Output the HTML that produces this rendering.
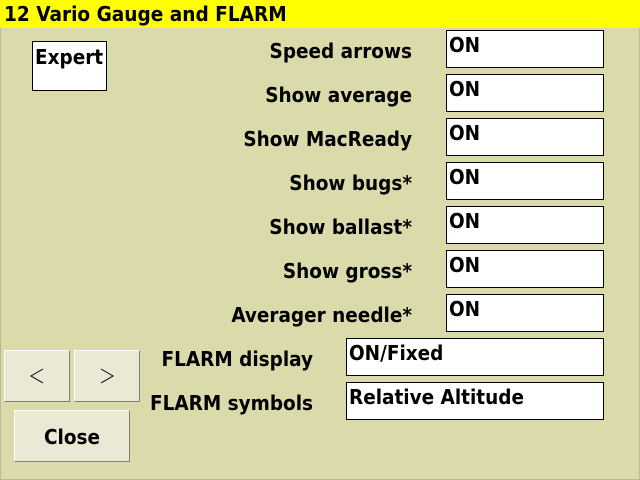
<!DOCTYPE html>
<html><head><style>
*{margin:0;padding:0;box-sizing:border-box}
body{width:640px;height:480px;background:#dadaab;position:relative;overflow:hidden;font-family:"DejaVu Sans Condensed","DejaVu Sans","Liberation Sans",sans-serif;font-stretch:condensed;font-weight:bold;font-size:20.5px;color:#000}
#frame{position:absolute;left:0;top:0;width:640px;height:480px;border:1px solid #b8b89a;border-top:none}
#title{position:absolute;left:0;top:0;width:640px;height:28px;background:#ffff00;padding-left:4px;line-height:28px;font-size:20.6px}
.box{position:absolute;background:#fff;border:1px solid #000;padding:1px 2px;line-height:26px}
.lbl{position:absolute;text-align:right;line-height:24px}
.btn{position:absolute;background:#ebe8d6;border:1px solid;border-color:#fff #808070 #808070 #fff;text-align:center}
</style></head><body>
<div id="frame"></div>
<div id="title">12 Vario Gauge and FLARM</div>
<div class="box" style="left:32px;top:41px;width:75px;height:50px;padding:2px 2px">Expert</div>

<div class="lbl" style="right:228px;top:39px">Speed arrows</div>
<div class="lbl" style="right:228px;top:83px">Show average</div>
<div class="lbl" style="right:228px;top:127px">Show MacReady</div>
<div class="lbl" style="right:228px;top:171px">Show bugs*</div>
<div class="lbl" style="right:228px;top:215px">Show ballast*</div>
<div class="lbl" style="right:228px;top:259px">Show gross*</div>
<div class="lbl" style="right:228px;top:303px">Averager needle*</div>
<div class="lbl" style="right:327px;top:347px">FLARM display</div>
<div class="lbl" style="right:327px;top:391px">FLARM symbols</div>

<div class="box" style="left:446px;top:30px;width:158px;height:38px">ON</div>
<div class="box" style="left:446px;top:74px;width:158px;height:38px">ON</div>
<div class="box" style="left:446px;top:118px;width:158px;height:38px">ON</div>
<div class="box" style="left:446px;top:162px;width:158px;height:38px">ON</div>
<div class="box" style="left:446px;top:206px;width:158px;height:38px">ON</div>
<div class="box" style="left:446px;top:250px;width:158px;height:38px">ON</div>
<div class="box" style="left:446px;top:294px;width:158px;height:38px">ON</div>
<div class="box" style="left:346px;top:338px;width:258px;height:38px">ON/Fixed</div>
<div class="box" style="left:346px;top:382px;width:258px;height:38px">Relative Altitude</div>

<div class="btn" style="left:4px;top:350px;width:66px;height:52px">
<svg width="64" height="50"><path d="M38 18 L26 25 L38 32" fill="none" stroke="#000" stroke-width="1"/></svg></div>
<div class="btn" style="left:74px;top:350px;width:66px;height:52px">
<svg width="64" height="50"><path d="M26 18 L38 25 L26 32" fill="none" stroke="#000" stroke-width="1"/></svg></div>
<div class="btn" style="left:14px;top:410px;width:116px;height:52px;line-height:52px">Close</div>
</body></html>
